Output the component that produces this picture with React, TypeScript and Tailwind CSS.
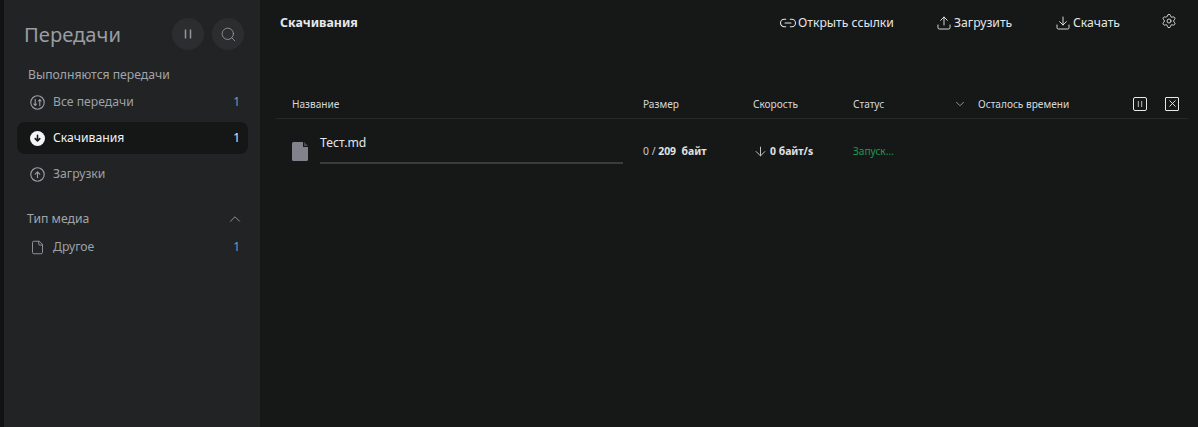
import { ArrowDown, ChevronDown, ChevronUp, Download, File, Link2, Search, Settings, Upload, X } from 'lucide-react';

function PauseLines({ size, width }: { size: number; width: number }) {
    return (
        <svg width={size} height={size} viewBox="0 0 12 12" fill="none" stroke="currentColor" strokeWidth={width}>
            <path d="M3.5 1.5v9M8.5 1.5v9" />
        </svg>
    );
}

function AllIcon() {
    return (
        <svg width="15" height="15" viewBox="0 0 15 15" fill="none" stroke="currentColor" strokeWidth="1.1" strokeLinecap="round" strokeLinejoin="round">
            <circle cx="7.5" cy="7.5" r="6.7" />
            <path d="M5.2 4.4v6M3.9 9l1.3 1.4L6.5 9M9.8 10.6V4.6M8.5 6l1.3-1.4L11.1 6" />
        </svg>
    );
}

function DownCircle() {
    return (
        <svg width="15" height="15" viewBox="0 0 15 15">
            <circle cx="7.5" cy="7.5" r="7.5" fill="#f4f5f6" />
            <path d="M7.5 4.2v5.2M5.2 7.6l2.3 2.3 2.3-2.3" fill="none" stroke="#161818" strokeWidth="1.6" strokeLinecap="round" strokeLinejoin="round" />
        </svg>
    );
}

function UpCircle() {
    return (
        <svg width="15" height="15" viewBox="0 0 15 15" fill="none" stroke="currentColor" strokeWidth="1.1" strokeLinecap="round" strokeLinejoin="round">
            <circle cx="7.5" cy="7.5" r="6.7" />
            <path d="M7.5 10.6V5M5.2 7.2l2.3-2.3 2.3 2.3" />
        </svg>
    );
}

function FileSolid() {
    return (
        <svg width="16" height="19" viewBox="0 0 16 19">
            <path d="M1.5 0H11v4.5a.5.5 0 0 0 .5.5H16v12.5a1.5 1.5 0 0 1-1.5 1.5h-13A1.5 1.5 0 0 1 0 17.5v-16A1.5 1.5 0 0 1 1.5 0z" fill="#80838c" />
            <path d="M12 0l4 4h-4z" fill="#4a4c52" />
        </svg>
    );
}

const menuClass = 'mx-[13px] flex h-[32px] items-center rounded-lg pl-[13px] text-[12.2px]';

function NavItem({ icon, label, count, active }: { icon: React.ReactNode; label: string; count?: number; active?: boolean }) {
    return (
        <div className={active ? `${menuClass} bg-[#151717] pr-[8px] text-[#f0f2f4]` : `${menuClass} pr-[7px] text-[#9da1a6]`}>
            <span className="flex w-[23px] shrink-0 items-center">{icon}</span>
            <span className="flex-1">{label}</span>
            {count !== undefined && <span className={active ? 'text-[12px] text-[#dfe9f2]' : 'text-[12px] text-[#7c9db8]'}>{count}</span>}
        </div>
    );
}

function HeaderAction({ icon, label, className }: { icon: React.ReactNode; label: string; className: string }) {
    return (
        <div className={`flex items-center text-[12.2px] text-[#e4e6e8] ${className}`}>
            {icon}
            <span>{label}</span>
        </div>
    );
}

export default function App() {
    return (
        <div className="flex h-screen w-full overflow-hidden bg-[#161818] font-['Noto_Sans',sans-serif]">
            <div className="w-[4px] shrink-0 bg-[#111213]" />
            <aside className="w-[256px] shrink-0 bg-[#212325]">
                <div className="flex h-[68px] items-center pl-[20px] pr-[16px]">
                    <h1 className="flex-1 text-[20.2px] font-normal text-[#9a9da1]">Передачи</h1>
                    <div className="flex gap-[8px]">
                        <button className="flex h-[32px] w-[32px] items-center justify-center rounded-full bg-[#2b2d2f] text-[#94979b]">
                            <PauseLines size={12} width={1.5} />
                        </button>
                        <button className="flex h-[32px] w-[32px] items-center justify-center rounded-full bg-[#2b2d2f] text-[#94979b]">
                            <Search size={17} strokeWidth={1.25} />
                        </button>
                    </div>
                </div>
                <div className="pl-[24px] text-[12.2px] leading-[14px] text-[#a1a5a9]">Выполняются передачи</div>
                <div className="mt-[4px] flex flex-col gap-[4px]">
                    <NavItem icon={<AllIcon />} label="Все передачи" count={1} />
                    <div className="mr-[-1px]">
                        <NavItem icon={<DownCircle />} label="Скачивания" count={1} active />
                    </div>
                    <NavItem icon={<UpCircle />} label="Загрузки" />
                </div>
                <div className="mt-[20px] flex items-center pl-[23px] pr-[16px] text-[12.2px] text-[#a1a5a9]">
                    <span className="flex-1">Тип медиа</span>
                    <ChevronUp size={18} strokeWidth={1.25} className="text-[#94979b]" />
                </div>
                <div className="mt-[3px]">
                    <NavItem icon={<File size={15} strokeWidth={1.4} />} label="Другое" count={1} />
                </div>
            </aside>
            <main className="min-w-0 flex-1">
                <header className="flex h-[44px] items-center pl-[20px]">
                    <h2 className="w-[499px] shrink-0 translate-y-[1px] text-[12.4px] font-bold text-[#e6e8ea]">Скачивания</h2>
                    <HeaderAction className="w-[157px] shrink-0 translate-y-[1px] gap-[1px]" icon={<Link2 size={18} strokeWidth={1.4} />} label="Открыть ссылки" />
                    <HeaderAction className="w-[119px] shrink-0 translate-y-[1px] gap-[2px]" icon={<Upload size={16} strokeWidth={1.4} />} label="Загрузить" />
                    <HeaderAction className="w-[106px] shrink-0 translate-y-[1px] gap-[2px]" icon={<Download size={16} strokeWidth={1.4} />} label="Скачать" />
                    <Settings size={16} strokeWidth={1.4} className="-translate-y-[1px] text-[#d8dadd]" />
                </header>
                <section className="ml-[16px] mr-[10px] mt-[45px]">
                    <div className="flex h-[30px] items-center border-b border-[#262829] pt-[2px] text-[10.1px] text-[#d5d9dc]">
                        <div className="w-[367px] shrink-0 pl-[16px]">Название</div>
                        <div className="w-[110px] shrink-0">Размер</div>
                        <div className="w-[100px] shrink-0">Скорость</div>
                        <div className="w-[100px] shrink-0">Статус</div>
                        <ChevronDown size={14} strokeWidth={1.5} className="mr-[11px] shrink-0 -translate-y-[1px] text-[#a5a8ac]" />
                        <div className="w-[155px] shrink-0">Осталось времени</div>
                        <div className="flex h-[14px] w-[14px] shrink-0 -translate-y-[1px] items-center justify-center rounded-[2px] border border-[#e8e8e8] text-[#b9bcbf]">
                            <PauseLines size={8} width={1.5} />
                        </div>
                        <div className="ml-[18px] flex h-[14px] w-[14px] shrink-0 -translate-y-[1px] items-center justify-center rounded-[1px] border border-[#e8e8e8] text-[#f0f0f0]">
                            <X size={11} strokeWidth={2} />
                        </div>
                    </div>
                    <div className="flex h-[64px] items-center">
                        <div className="flex w-[367px] shrink-0 items-center pl-[16px]">
                            <FileSolid />
                            <div className="ml-[12px] w-[303px] -translate-y-[2px]">
                                <div className="-translate-y-[1px] text-[12.2px] leading-[17px] text-[#e4e7ea]">Тест.md</div>
                                <div className="mt-[10px] h-[2px] bg-[#3a3b3c]" />
                            </div>
                        </div>
                        <div className="w-[110px] shrink-0 translate-y-[1px] text-[10.4px] font-bold text-[#e0e3e5]">
                            <span className="font-normal text-[#c4ccd2]">0 / </span>209&nbsp; байт
                        </div>
                        <div className="flex w-[100px] shrink-0 translate-y-[1px] items-center gap-[2px] text-[10.4px] font-bold text-[#e0e3e5]">
                            <ArrowDown size={15} strokeWidth={1.6} className="text-[#bfc2c5]" />
                            0 байт/s
                        </div>
                        <div className="translate-y-[1px] text-[10.1px] text-[#1c9a50]">Запуск...</div>
                    </div>
                </section>
            </main>
        </div>
    );
}
